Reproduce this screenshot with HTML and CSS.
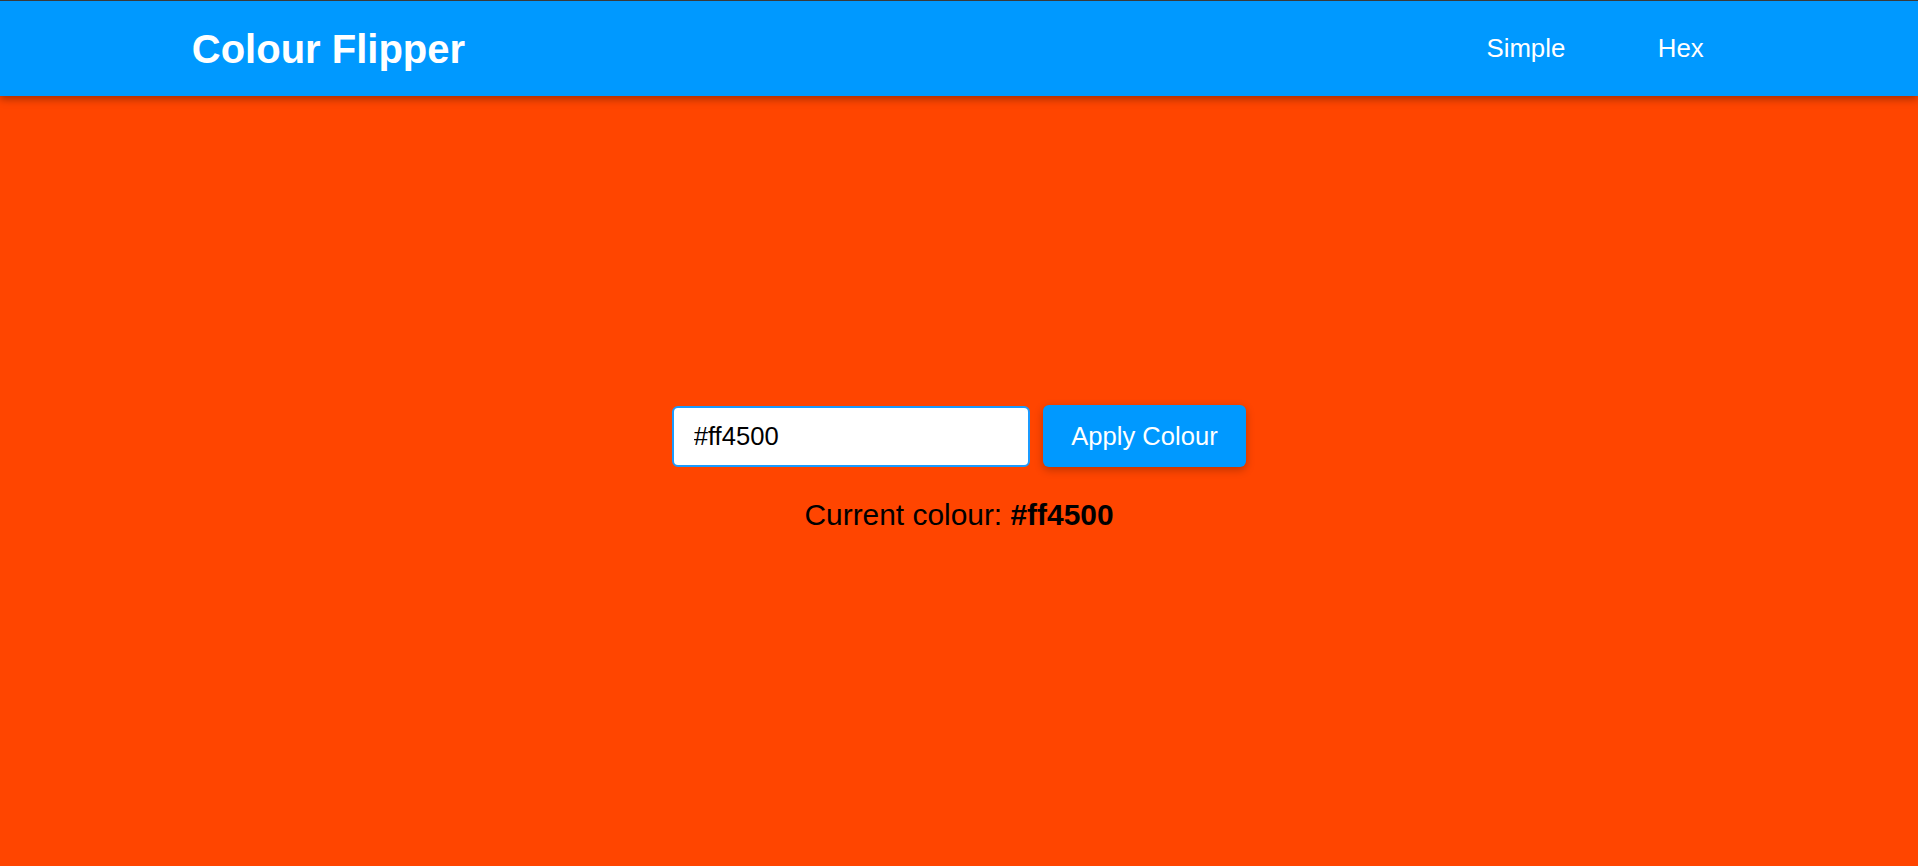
FILE: index.html
```html
<!DOCTYPE html>
<html lang="en">
<head>
<meta charset="utf-8">
<title>Colour Flipper</title>
<link rel="stylesheet" href="styles.css">
</head>
<body>
<header class="navbar">
  <div class="nav-inner">
    <h1 class="brand">Colour Flipper</h1>
    <nav class="nav-links">
      <a class="nav-link" href="#">Simple</a>
      <a class="nav-link" href="#">Hex</a>
    </nav>
  </div>
</header>
<main class="main">
  <div class="panel">
    <form class="controls">
      <input class="colour-input" type="text" value="#ff4500">
      <button class="apply-btn" type="button">Apply Colour</button>
    </form>
    <p class="current">Current colour: <strong>#ff4500</strong></p>
  </div>
</main>
</body>
</html>
```
FILE: styles.css
```css
* { box-sizing: border-box; }
html, body { margin: 0; padding: 0; }
body {
  font-family: "Liberation Sans", Arial, sans-serif;
  background: #ff4500;
  color: #000;
  min-height: 100vh;
}
.navbar {
  height: 96px;
  background: #0099ff;
  border-top: 1px solid #3a3a3a;
  box-shadow: 0 3px 8px rgba(0, 0, 0, 0.35);
  position: relative;
  z-index: 1;
}
.nav-inner {
  width: 80%;
  margin: 0 auto;
  height: 100%;
  display: flex;
  align-items: center;
  justify-content: space-between;
}
.brand {
  margin: 0;
  font-size: 40px;
  font-weight: 700;
  color: #fff;
  line-height: 1;
}
.nav-links {
  display: flex;
  gap: 48px;
}
.nav-link {
  color: #fff;
  text-decoration: none;
  font-size: 25.8px;
  padding: 0 22.5px 0 22px;
}
.main {
  min-height: calc(100vh - 96px);
  display: flex;
  align-items: center;
  justify-content: center;
  padding-bottom: 25px;
}
.panel {
  display: flex;
  flex-direction: column;
  align-items: center;
}
.controls {
  display: flex;
  gap: 13px;
  align-items: center;
  margin: 0;
}
.colour-input {
  width: 358px;
  height: 61px;
  font-family: inherit;
  font-size: 25.6px;
  padding: 0 20px;
  border: 2px solid #1a9bff;
  border-radius: 6px;
  background: #fff;
  color: #000;
  outline: none;
}
.apply-btn {
  height: 62px;
  font-family: inherit;
  font-size: 25.6px;
  padding: 0 28.5px;
  border: none;
  border-radius: 6px;
  background: #0099ff;
  color: #fff;
  box-shadow: 0 3px 8px rgba(0, 0, 0, 0.25);
  cursor: pointer;
}
.current {
  margin: 31px 0 0;
  font-size: 29.9px;
}
.current strong { font-weight: 700; }
```
